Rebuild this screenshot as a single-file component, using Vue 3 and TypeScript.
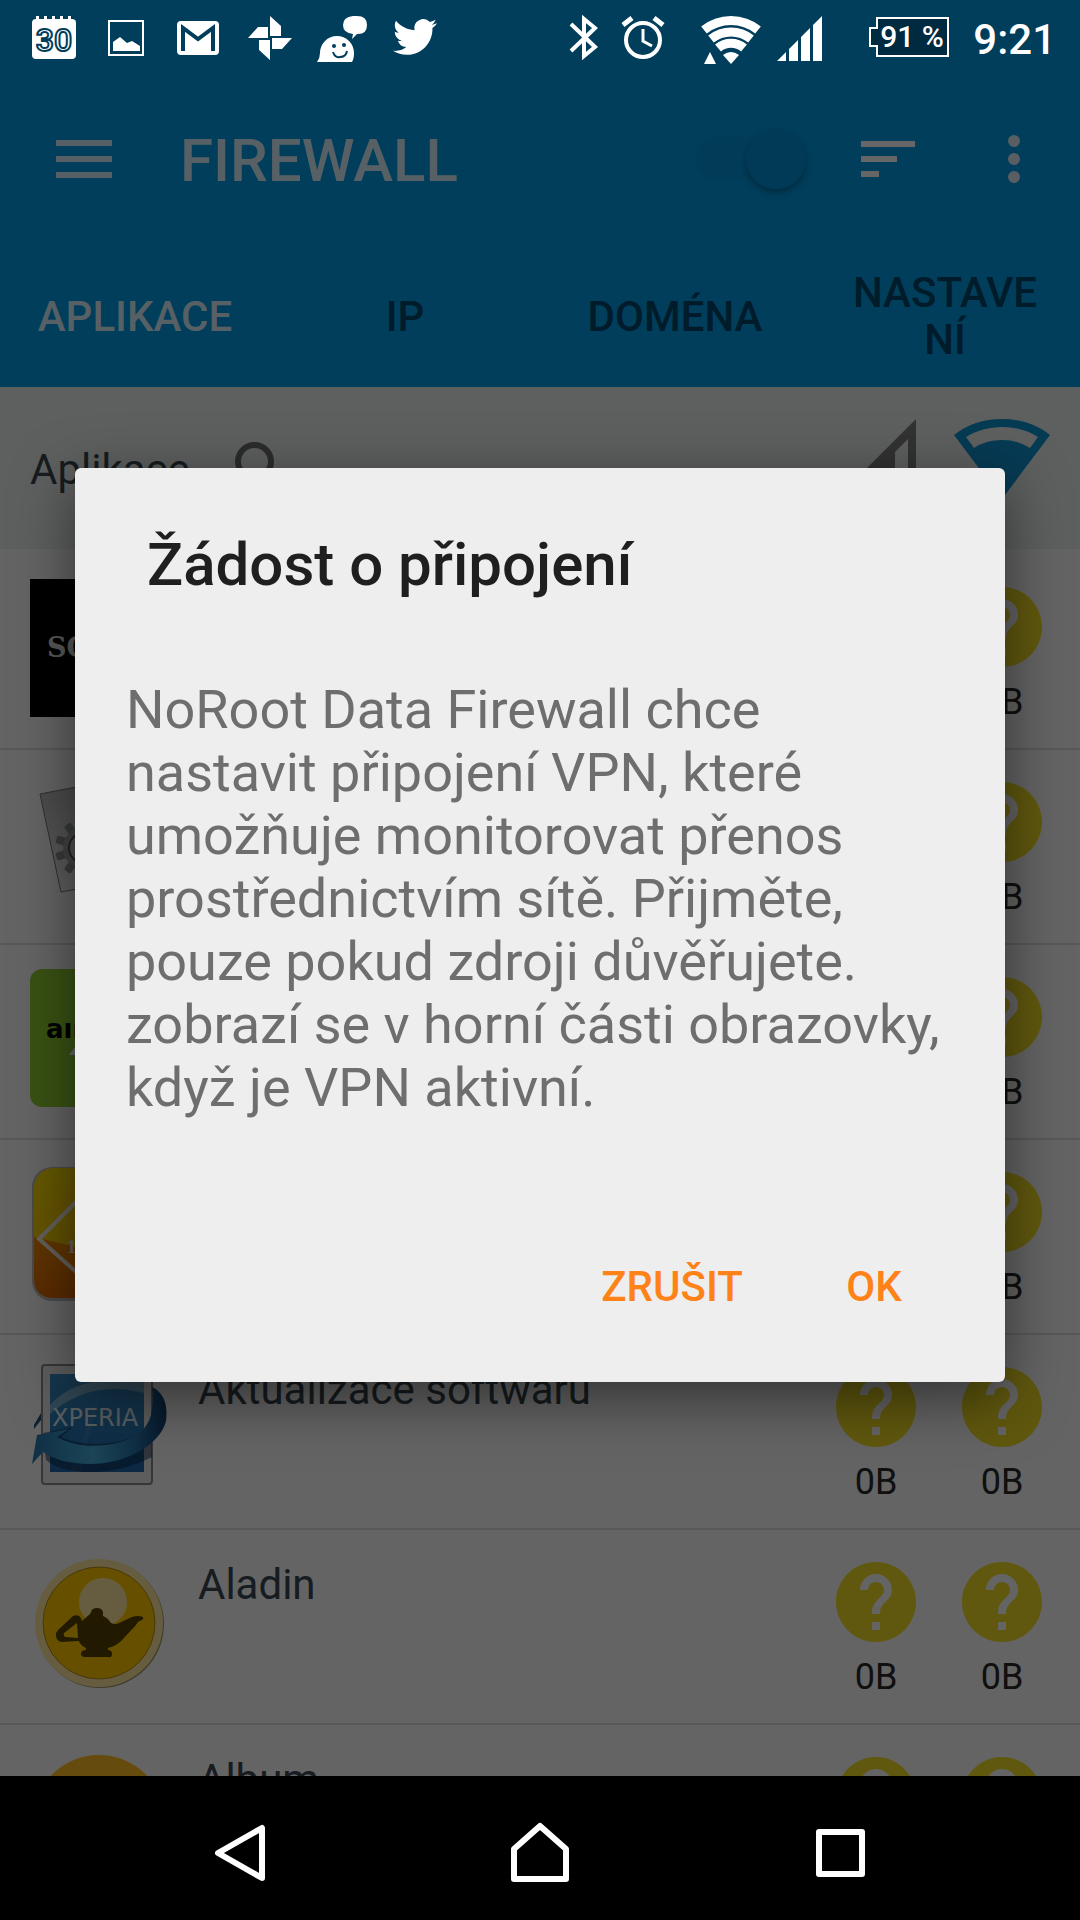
<script setup lang="ts">
import { ref } from 'vue'

interface AppRow {
  id: string
  name: string
  usage: [string, string]
}

const rows: AppRow[] = [
  { id: 'sony', name: '', usage: ['', '0B'] },
  { id: 'gear', name: '', usage: ['', '0B'] },
  { id: 'air', name: '', usage: ['', '0B'] },
  { id: 'diamond', name: '', usage: ['', '0B'] },
  { id: 'xperia', name: 'Aktualizace softwaru', usage: ['0B', '0B'] },
  { id: 'lamp', name: 'Aladin', usage: ['0B', '0B'] },
  { id: 'album', name: 'Album', usage: ['', ''] },
]

const tabs: string[] = ['APLIKACE', 'IP', 'DOMÉNA', 'NASTAVENÍ']
const activeTab = ref(0)
const enabled = ref(true)
const gearTeeth = [0, 36, 72, 108, 144, 180, 216, 252, 288, 324]
</script>

<template>
  <div class="screen">
    <header class="status">
      <div class="notifications">
        <svg class="s48" viewBox="0 0 48 75">
          <path class="w" d="M6 19h36q4 0 4 4v32q0 4-4 4H6q-4 0-4-4V23q0-4 4-4z" />
          <path class="w" d="M6 16h3v4H6zM14 16h3v4h-3zM22 16h3v4h-3zM30 16h3v4h-3zM38 16h3v4h-3z" />
          <text x="24" y="51" class="cal">30</text>
        </svg>
        <svg class="s48" viewBox="0 0 48 75">
          <rect x="7" y="21" width="34" height="34" class="line" stroke-width="2" />
          <path class="w" d="M11 42l7-5 7 6 5-2 8 5v5H11z" />
        </svg>
        <svg class="s48" viewBox="0 0 48 75">
          <rect x="3" y="21" width="42" height="34" rx="4" class="w" />
          <path d="M9 51V28l15 11 15-11v23" fill="none" stroke="#003e5b" stroke-width="4" />
        </svg>
        <svg class="s48" viewBox="0 0 48 75">
          <path class="w" d="M24 16l11 10v10H24zM2 38l10-11h10v11zM13 40h11v20l-11-10zM26 38h20L36 49H26z" />
        </svg>
        <svg class="s48" viewBox="0 0 48 75">
          <path class="w" d="M-1 62q3-4 3-9A17 17 0 0 1 36 53q0 6-2 9z" />
          <path class="w" d="M35 16h4q10 0 10 9t-9 9h-1l-5 5 1-5q-10-1-10-9t10-9z" />
          <circle cx="16" cy="46" r="2" fill="#003e5b" />
          <circle cx="26" cy="45" r="2" fill="#003e5b" />
          <path d="M15 52q2 6 7 5 6 0 7-6" fill="none" stroke="#003e5b" stroke-width="2" />
        </svg>
        <svg class="s48" viewBox="0 0 48 75">
          <path
            class="w"
            transform="translate(3 15) scale(1.83)"
            d="M23.953 4.57a10 10 0 01-2.825.775 4.958 4.958 0 002.163-2.723c-.951.555-2.005.959-3.127 1.184a4.92 4.92 0 00-8.384 4.482C7.69 8.095 4.067 6.13 1.64 3.162a4.822 4.822 0 00-.666 2.475c0 1.71.87 3.213 2.188 4.096a4.904 4.904 0 01-2.228-.616v.06a4.923 4.923 0 003.946 4.827 4.996 4.996 0 01-2.212.085 4.936 4.936 0 004.604 3.417 9.867 9.867 0 01-6.102 2.105c-.39 0-.779-.023-1.17-.067a13.995 13.995 0 007.557 2.209c9.053 0 13.998-7.496 13.998-13.985 0-.21 0-.42-.015-.63A9.935 9.935 0 0024 4.59z"
          />
        </svg>
      </div>
      <div class="system">
        <div class="pair">
          <svg class="s48" viewBox="0 0 48 75">
            <path class="line" stroke-width="4" d="M12 24l24 23-11 9V19l11 9-24 23" />
          </svg>
          <svg class="s48" viewBox="0 0 48 75">
            <circle cx="24" cy="40" r="17" class="line" stroke-width="4" />
            <path class="line" stroke-width="3" d="M24 29v12l9 5" />
            <path class="line" stroke-width="5" d="M4 25l9-7M35 18l9 7" />
          </svg>
        </div>
        <div class="pair">
          <svg class="s60" viewBox="0 0 60 75">
            <path class="line" stroke-width="9" d="M3 30A43 43 0 0 1 57 30" />
            <path class="line" stroke-width="9" d="M10 39A32 32 0 0 1 50 39" />
            <path class="line" stroke-width="9" d="M17 48A20 20 0 0 1 43 48" />
            <path class="w" d="M30 64l-8-9q8-6 16 0z" />
            <path class="w" d="M3 64l6-12 6 12z" />
          </svg>
          <svg class="s48" viewBox="0 0 48 75">
            <path class="w" d="M1 61l9-9v9zM13 61V49l9-9v21zM25 61V37l9-9v33zM37 61V25l9-9v45z" />
          </svg>
        </div>
        <div class="battery">
          <svg viewBox="0 0 82 75">
            <path d="M9 18h71v38H9V46H2V28h7z" fill="#002a40" stroke="#fff" stroke-width="2" />
          </svg>
          <span>91 %</span>
        </div>
        <time class="clock">9:21</time>
      </div>
    </header>

    <main class="stage">
      <div class="appbar">
        <div class="toolbar">
          <button class="icon menu" aria-label="Menu">
            <svg width="56" height="38" viewBox="0 0 56 38"><path fill="#d9f0fb" d="M0 0h56v6H0zM0 16h56v6H0zM0 32h56v6H0z" /></svg>
          </button>
          <h1>FIREWALL</h1>
          <input v-model="enabled" class="switch" type="checkbox" role="switch" aria-label="Firewall" />
          <button class="icon sort" aria-label="Seřadit">
            <svg width="54" height="36" viewBox="0 0 54 36"><path fill="#fff" d="M0 0h54v6H0zM0 15h36v6H0zM0 30h18v6H0z" /></svg>
          </button>
          <button class="icon more" aria-label="Další">
            <svg width="12" height="48" viewBox="0 0 12 48" fill="#dcecf2">
              <circle cx="6" cy="6" r="6" /><circle cx="6" cy="24" r="6" /><circle cx="6" cy="42" r="6" />
            </svg>
          </button>
        </div>
        <nav class="tabs">
          <button v-for="(tab, i) in tabs" :key="tab" :class="{ on: i === activeTab }" @click="activeTab = i">{{ tab }}</button>
        </nav>
      </div>

      <div class="listhead">
        <span>Aplikace</span>
        <svg class="search" viewBox="0 0 24 24">
          <path fill="#6e6e6e" d="M15.5 14h-.79l-.28-.27A6.47 6.47 0 0 0 16 9.5 6.5 6.5 0 1 0 9.5 16c1.61 0 3.09-.59 4.23-1.57l.27.28v.79l5 4.99L20.49 19l-4.99-5zm-6 0C7.01 14 5 11.99 5 9.5S7.01 5 9.5 5 14 7.01 14 9.5 11.99 14 9.5 14z" />
        </svg>
        <div class="nets">
          <svg width="80" height="80" viewBox="0 0 80 80">
            <path fill="#7d7d7d" fill-rule="evenodd" d="M80 0v80H0zM72 20L59 33v39h13z" />
          </svg>
          <svg width="96" height="80" viewBox="0 0 96 80">
            <path fill="#0f93d2" fill-rule="evenodd" d="M0 16Q20 0 48 0t48 16L48 80zM12 18l8 11q12-8 28-8t28 8l8-11Q68 8 48 8T12 18z" />
          </svg>
        </div>
      </div>

      <ul class="apps">
        <li v-for="row in rows" :key="row.id">
          <svg class="appicon" viewBox="0 0 138 138" aria-hidden="true">
            <defs>
              <linearGradient id="sun" x1="0" y1="0" x2="1" y2="1"><stop offset="0" stop-color="#ffe000" /><stop offset="1" stop-color="#e8a800" /></linearGradient>
              <linearGradient id="fire" x1="0" y1="0" x2="0" y2="1"><stop offset="0" stop-color="#f08a00" /><stop offset="1" stop-color="#e06a00" /></linearGradient>
              <linearGradient id="paper" x1="0" y1="0" x2="0" y2="1"><stop offset="0" stop-color="#b4b4b4" /><stop offset="1" stop-color="#f0f0f0" /></linearGradient>
              <linearGradient id="sky" x1="0" y1="0" x2="0" y2="1"><stop offset="0" stop-color="#3a8cc4" /><stop offset=".5" stop-color="#2a7cb8" /><stop offset="1" stop-color="#2064a8" /></linearGradient>
              <linearGradient id="ribbon" x1="0" y1="0" x2="1" y2="0"><stop offset="0" stop-color="#2a78ac" /><stop offset=".45" stop-color="#46b0dc" /><stop offset=".75" stop-color="#2a78b0" /><stop offset="1" stop-color="#123f70" /></linearGradient>
            </defs>
            <template v-if="row.id === 'sony'">
              <rect width="138" height="138" fill="#000" />
              <text x="17" y="78" class="sony">SONY</text>
            </template>
            <template v-else-if="row.id === 'gear'">
              <path d="M10 20L94 4l22 98-85 16z" fill="url(#paper)" stroke="#777" stroke-width="1" />
              <g fill="#8d9196">
                <rect v-for="a in gearTeeth" :key="a" x="50" y="45" width="8" height="14" rx="2" :transform="`rotate(${a} 54 74)`" />
              </g>
              <circle cx="54" cy="74" r="18" fill="none" stroke="#a4a8ac" stroke-width="6" />
              <circle cx="54" cy="74" r="15" fill="#c8c8c8" stroke="#555" stroke-width="2" />
            </template>
            <template v-else-if="row.id === 'air'">
              <rect width="138" height="138" rx="12" fill="#92cc34" />
              <text x="16" y="69" class="air">aır</text>
              <path d="M39 86l8-11h6l-8 11z" fill="#fff" />
            </template>
            <template v-else-if="row.id === 'diamond'">
              <rect x="2" y="3" width="134" height="134" rx="20" fill="#000" opacity=".25" />
              <rect x="4" y="4" width="130" height="130" rx="20" fill="url(#sun)" />
              <path d="M4 73l42 10h88v31q0 20-20 20H24q-20 0-20-20z" fill="url(#fire)" />
              <path d="M70 14L9 75l61 54 59-54z" fill="none" stroke="#f4f0e4" stroke-width="4" />
              <text x="37" y="89" class="one">1</text>
            </template>
            <template v-else-if="row.id === 'xperia'">
              <path d="M4 66l7-12v7l-7 9z" fill="#1f5580" />
              <rect x="12" y="6" width="110" height="119" rx="3" fill="#e9e9e9" stroke="#8a8a8a" stroke-width="2" />
              <rect x="20" y="15" width="94" height="98" fill="url(#sky)" />
              <path d="M20 46Q48 14 114 22V34Q60 20 20 55z" fill="#9cc4d8" opacity=".7" />
              <path d="M60 60L72 26 50 113H40z" fill="#fff" opacity=".07" />
              <path
                fill="#0a2440"
                opacity=".5"
                d="M13 74l30-6-12 10c20 9 40 8 60 4 20-5 28-14 30-24l1 40q-30 15-62 15-30 0-44-12z"
              />
              <path
                fill="url(#ribbon)"
                d="M7 76l32-6-12 8c20 11 40 10 60 6 20-5 30-14 34-28 2-10 2-20 1-28 13 6 16 20 14 34-6 24-40 43-76 43-20 0-38-5-47-12L2 105z"
              />
              <text x="22" y="67" class="xp">XPERIA</text>
            </template>
            <template v-else-if="row.id === 'lamp'">
              <circle cx="70" cy="70" r="64" fill="#a3976a" />
              <circle cx="69" cy="69" r="64" fill="#ffe9a0" />
              <circle cx="69" cy="69" r="56" fill="#ffc900" stroke="#b08a20" stroke-width="1" />
              <circle cx="73" cy="48" r="24" fill="#ffe9a0" />
              <path
                fill="#554200"
                fill-rule="evenodd"
                d="M61 58q1-4 6-4 5 0 6 4v4q5 2 8 7 4 2 8 0l13-6q6-2 11 0 1 2-1 3-4 1-6 5L93 85q-6 7-15 9v2q4 0 4 4t-4 3H55q-4 0-4-3 0-4 5-4v-2q-6-3-7-7l-18 1q-6-2-5-9l2-3 15-14q7-3 9 5l8-7zM47 69L34 79q-1 4 2 4l12 1z"
              />
            </template>
            <circle v-else cx="69" cy="72" r="66" fill="#ffbc24" />
          </svg>
          <span class="name">{{ row.name }}</span>
          <div v-for="(amount, n) in row.usage" :key="n" class="rule">
            <svg width="80" height="80" viewBox="2 2 20 20" aria-hidden="true">
              <path fill="#f0dc24" d="M12 2C6.48 2 2 6.48 2 12s4.480 10 10 10 10-4.480 10-10S17.520 2 12 2zm1 17h-2v-2h2v2zm2.070-7.750l-.9.920C13.450 12.900 13 13.500 13 15h-2v-.5c0-1.100.450-2.100 1.170-2.830l1.240-1.260c.370-.360.590-.860.590-1.410 0-1.100-.9-2-2-2s-2 .9-2 2H8c0-2.210 1.790-4 4-4s4 1.790 4 4c0 .880-.360 1.680-.930 2.250z" />
            </svg>
            <span>{{ amount }}</span>
          </div>
        </li>
      </ul>

      <div class="backdrop">
        <section class="dialog" role="dialog" aria-labelledby="dlg-title">
          <h2 id="dlg-title">Žádost o připojení</h2>
          <p>
            NoRoot Data Firewall chce nastavit připojení VPN, které umožňuje monitorovat přenos
            prostřednictvím sítě. Přijměte, pouze pokud zdroji důvěřujete.<br />
            zobrazí se v&nbsp;horní části obrazovky, když je VPN aktivní.
          </p>
          <div class="actions">
            <button>ZRUŠIT</button>
            <button>OK</button>
          </div>
        </section>
      </div>
    </main>

    <footer class="navbar">
      <button aria-label="Zpět">
        <svg width="60" height="64" viewBox="0 0 60 64"><path d="M52 7v50L8 32z" /></svg>
      </button>
      <button aria-label="Domů">
        <svg width="60" height="64" viewBox="0 0 60 64"><path d="M4 58V28L30 5l26 23v30z" /></svg>
      </button>
      <button aria-label="Poslední aplikace">
        <svg width="60" height="64" viewBox="0 0 60 64"><path d="M9 11h43v42H9z" /></svg>
      </button>
    </footer>
  </div>
</template>

<style>
body {
  margin: 0;
  background: #000;
}
</style>

<style scoped>
* {
  box-sizing: border-box;
}
.screen {
  display: flex;
  flex-direction: column;
  height: 100vh;
  font-family: Roboto, 'Noto Sans', sans-serif;
  overflow: hidden;
}
svg {
  display: block;
  flex: none;
  overflow: visible;
}
button {
  padding: 0;
  border: 0;
  background: none;
  font: inherit;
  color: inherit;
}
h1,
h2,
p,
ul {
  margin: 0;
  padding: 0;
}

.status {
  display: flex;
  justify-content: space-between;
  flex: none;
  height: 75px;
  padding: 0 24px 0 30px;
  background: #003e5b;
  color: #fff;
}
.notifications {
  display: flex;
  gap: 24px;
}
.system {
  display: flex;
  align-items: center;
}
.pair {
  display: flex;
  gap: 12px;
  margin-right: 34px;
}
.pair + .pair {
  gap: 15px;
  margin-right: 44px;
}
.s48 {
  width: 48px;
  height: 75px;
}
.s60 {
  width: 60px;
  height: 75px;
}
.w {
  fill: #fff;
}
.line {
  fill: none;
  stroke: #fff;
}
.cal {
  font-size: 32px;
  font-weight: 500;
  text-anchor: middle;
  fill: #fff;
  stroke: #003e5b;
  stroke-width: 2px;
}
.battery {
  position: relative;
  width: 82px;
  height: 75px;
  margin-right: 23px;
}
.battery span {
  position: absolute;
  inset: 0 0 0 12px;
  font-size: 30px;
  font-weight: 500;
  line-height: 74px;
}
.clock {
  padding-top: 4px;
  font-size: 42px;
  font-weight: 500;
  line-height: 76px;
}

.stage {
  position: relative;
  display: flex;
  flex-direction: column;
  flex: 1;
  min-height: 0;
  background: #fafafa;
}
.appbar {
  flex: none;
  background: #009be3;
}
.toolbar {
  display: flex;
  align-items: center;
  height: 168px;
  padding: 0 60px 0 56px;
}
h1 {
  padding-top: 2px;
  margin-left: 68px;
  font-size: 60px;
  font-weight: 500;
  color: #d9f0fb;
}
.switch {
  position: relative;
  appearance: none;
  width: 111px;
  height: 60px;
  margin: 0 0 0 auto;
}
.switch::before {
  content: '';
  position: absolute;
  inset: 8px 24px 8px 0;
  border-radius: 22px;
  background: #0095dc;
}
.switch::after {
  content: '';
  position: absolute;
  top: 0;
  right: 0;
  width: 60px;
  height: 60px;
  border-radius: 50%;
  background: #0092da;
  box-shadow: 0 4px 6px rgba(0, 0, 0, 0.3);
}
.sort {
  margin-left: 55px;
}
.more {
  margin-left: 93px;
}
.tabs {
  display: grid;
  grid-template-columns: repeat(4, 1fr);
  height: 144px;
}
.tabs button {
  padding: 2px 36px 0;
  font-size: 42px;
  font-weight: 500;
  line-height: 47px;
  word-break: break-all;
  color: #00466a;
}
.tabs button.on {
  color: #d9f0fb;
}

.listhead {
  display: flex;
  align-items: center;
  flex: none;
  height: 162px;
  padding: 2px 30px 0;
  background: #eceff0;
  font-size: 42px;
  color: #37474f;
}
.search {
  width: 72px;
  height: 72px;
  margin-left: 36px;
}
.nets {
  display: flex;
  gap: 38px;
  align-self: flex-start;
  margin-top: 30px;
  margin-left: auto;
}

.apps {
  flex: 1;
  min-height: 0;
  padding-top: 6px;
  overflow: hidden;
  list-style: none;
}
.apps li {
  display: flex;
  height: 195px;
  padding: 24px 38px 0 30px;
  border-bottom: 2px solid #dcdcdc;
}
.appicon {
  width: 138px;
  height: 138px;
}
.sony {
  font: bold 27px 'DejaVu Serif', serif;
  fill: #ddd;
}
.air {
  font: bold 26px 'DejaVu Sans', sans-serif;
  fill: #000;
}
.one {
  font: bold 18px 'Liberation Serif', serif;
  fill: #f4f0e4;
}
.xp {
  font: 24px 'DejaVu Sans', sans-serif;
  fill: #e0eef4;
}
.name {
  flex: 1;
  margin: 7px 0 0 30px;
  font-size: 42px;
  line-height: 48px;
  color: #37464f;
}
.rule {
  width: 80px;
  margin: 8px 0 0 46px;
  text-align: center;
  font-size: 36px;
  line-height: 40px;
  color: #2a2a2a;
}
.rule span {
  display: block;
  margin-top: 15px;
}

.backdrop {
  position: absolute;
  inset: 0;
  display: flex;
  align-items: center;
  padding: 0 75px 2px;
  background: rgba(0, 0, 0, 0.6);
  overflow: hidden;
}
.dialog {
  flex: 1;
  padding: 61px 35px 41px 51px;
  border-radius: 6px;
  background: #eee;
  box-shadow: 0 16px 60px rgba(0, 0, 0, 0.5);
}
h2 {
  margin-left: 21px;
  font-size: 60px;
  font-weight: 500;
  line-height: 72px;
  color: #1f1f1f;
}
p {
  margin: 77px 16px 114px 0;
  font-size: 54px;
  line-height: 63px;
  color: #6e6e6e;
}
.actions {
  display: flex;
  justify-content: flex-end;
  gap: 10px;
}
.actions button {
  min-width: 192px;
  height: 108px;
  font-size: 42px;
  font-weight: 500;
  color: #ff8218;
}

.navbar {
  display: grid;
  grid-template-columns: repeat(3, 1fr);
  flex: none;
  height: 144px;
  padding: 10px 90px 0;
  background: #000;
}
.navbar button {
  display: flex;
  align-items: center;
  justify-content: center;
}
.navbar path {
  fill: none;
  stroke: #fff;
  stroke-width: 6px;
  stroke-linejoin: round;
}
</style>
